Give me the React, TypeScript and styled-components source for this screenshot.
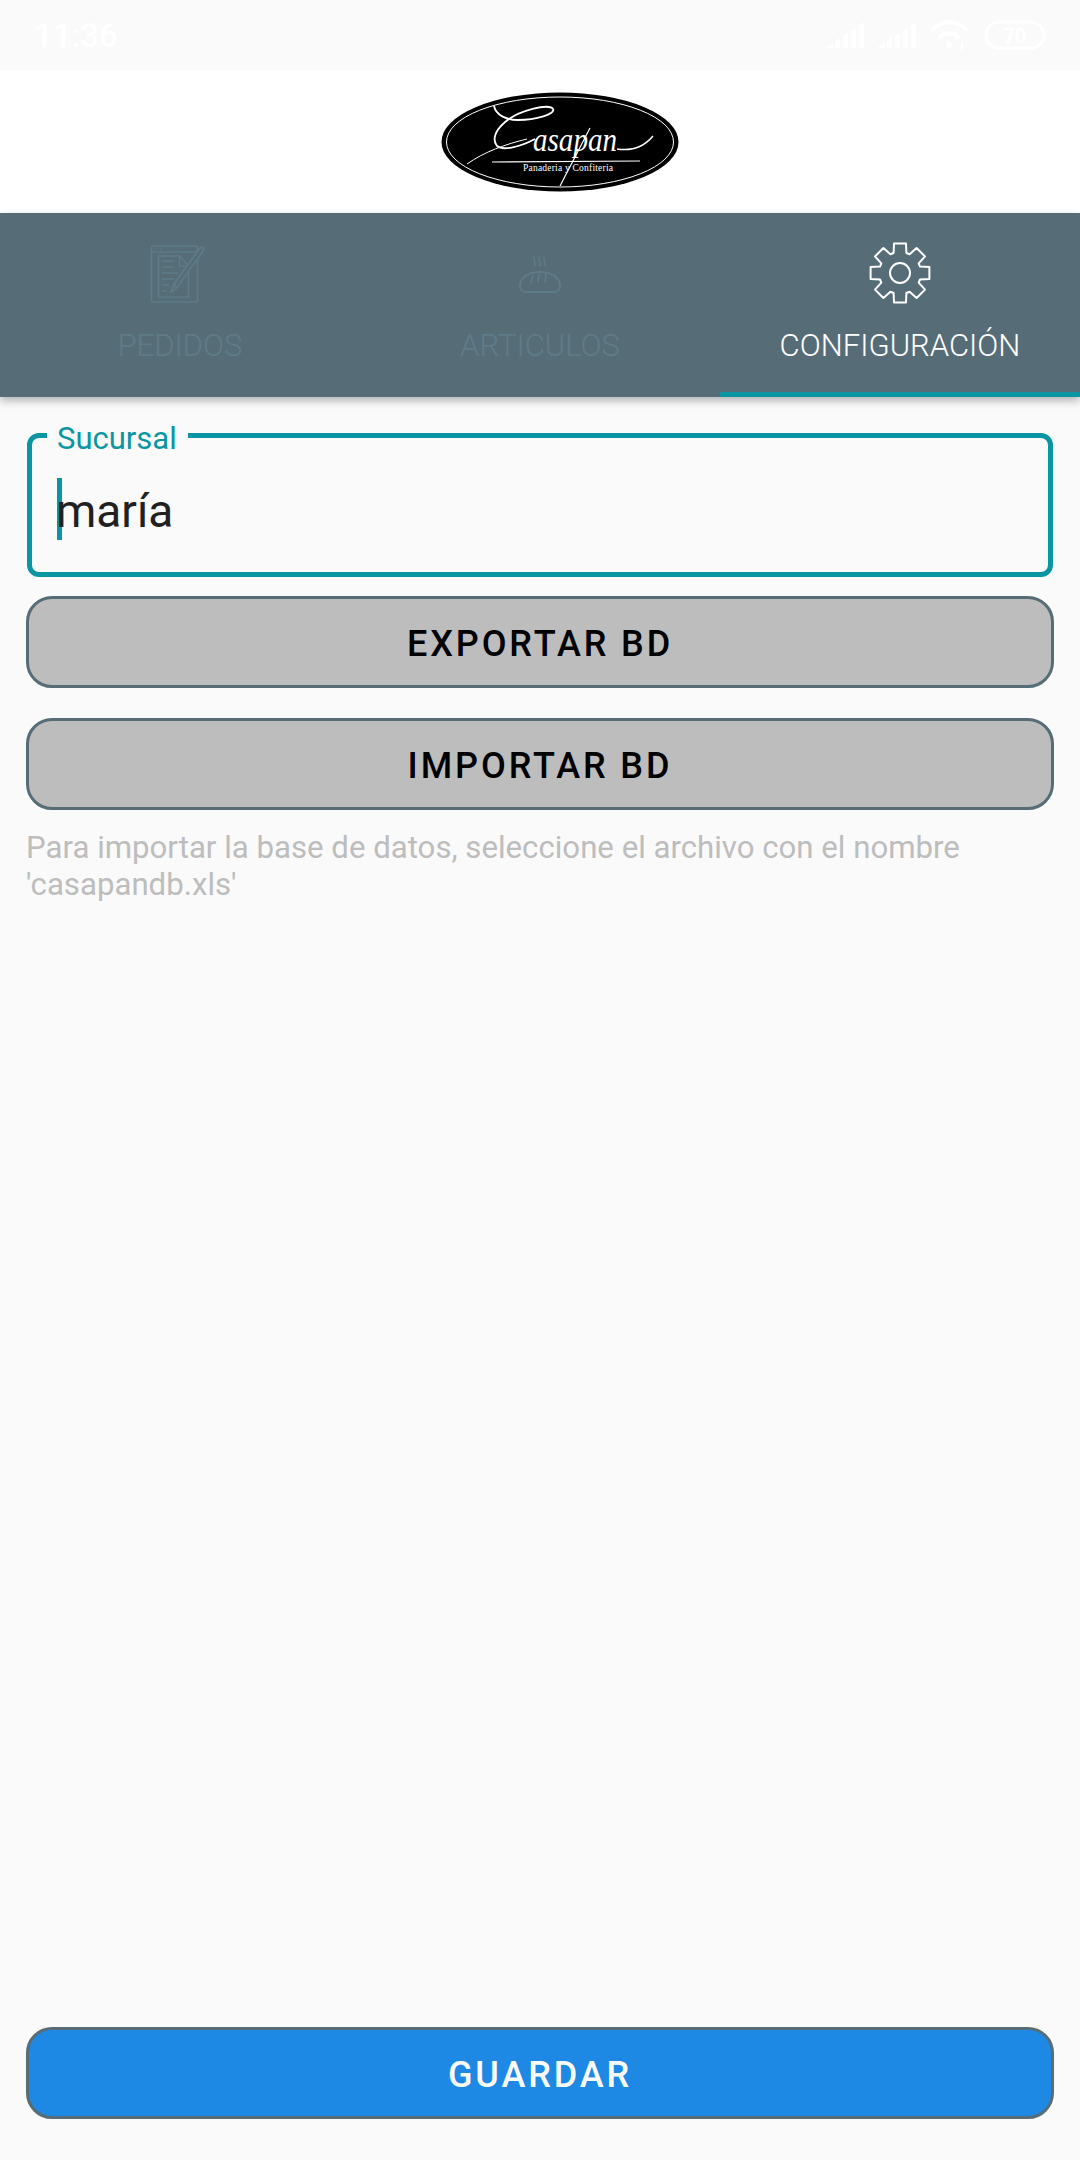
import styled, { createGlobalStyle } from 'styled-components';

const GlobalStyle = createGlobalStyle`
  html, body {
    margin: 0;
    padding: 0;
    background: #fafafa;
    font-family: 'Roboto', 'Liberation Sans', sans-serif;
  }
`;

const Page = styled.div`
  width: 1080px;
  height: 2160px;
  display: flex;
  flex-direction: column;
  background: #fafafa;
`;

const StatusBar = styled.div`
  height: 70px;
  flex: none;
  box-sizing: border-box;
  padding: 0 34px;
  display: flex;
  align-items: center;
  justify-content: space-between;
  color: #fff;
  background: #fafafa;
`;

const Clock = styled.span`
  font-size: 33px;
  font-weight: 500;
`;

const StatusIcons = styled.div`
  display: flex;
  align-items: center;
  gap: 14px;
`;

const LogoBar = styled.div`
  height: 143px;
  flex: none;
  background: #fff;
  display: flex;
  align-items: center;
  justify-content: center;
  padding-left: 40px;
`;

const TabBar = styled.div`
  height: 184px;
  flex: none;
  display: grid;
  grid-template-columns: repeat(3, 1fr);
  background: #566d78;
  box-shadow: 0 4px 8px rgba(0, 0, 0, 0.28);
  position: relative;
`;

const Tab = styled.div<{ $active?: boolean }>`
  box-sizing: border-box;
  height: 184px;
  display: flex;
  flex-direction: column;
  align-items: center;
  border-bottom: 5px solid ${(p) => (p.$active ? '#0a95a3' : 'transparent')};
  color: ${(p) => (p.$active ? '#ffffff' : '#5f7b88')};
`;

const TabIcon = styled.div<{ $top: number }>`
  box-sizing: border-box;
  height: 115px;
  width: 100%;
  padding-top: ${(p) => p.$top}px;
  display: flex;
  align-items: flex-start;
  justify-content: center;
`;

const TabLabel = styled.span`
  font-size: 31px;
  font-weight: 300;
  line-height: 36px;
`;

const Content = styled.main`
  flex: 1;
  box-sizing: border-box;
  padding: 36px 26px 41px;
  display: flex;
  flex-direction: column;
`;

const Field = styled.div`
  position: relative;
  height: 144px;
  box-sizing: border-box;
  margin: 0 0 19px 1px;
  width: 1026px;
  border: 5px solid #0a95a3;
  border-radius: 12px;
`;

const FieldLabel = styled.span`
  position: absolute;
  left: 15px;
  top: -17px;
  padding: 0 11px 0 10px;
  background: #fafafa;
  color: #0a95a3;
  font-size: 31px;
  line-height: 36px;
`;

const FieldValue = styled.div`
  position: absolute;
  left: 25px;
  top: 40px;
  height: 62px;
  border-left: 5px solid #0a95a3;
`;

const ValueText = styled.span`
  position: absolute;
  left: -6px;
  top: 4px;
  font-size: 46px;
  line-height: 58px;
  color: #212121;
`;

const Button = styled.div<{ $primary?: boolean }>`
  height: 92px;
  box-sizing: border-box;
  flex: none;
  display: flex;
  align-items: center;
  justify-content: center;
  padding-top: 3px;
  border: 3px solid #566d78;
  border-radius: 26px;
  background: ${(p) => (p.$primary ? '#1e88e5' : '#bdbdbd')};
  color: ${(p) => (p.$primary ? '#fafafa' : '#000000')};
  font-size: 36px;
  font-weight: 500;
  letter-spacing: 2.9px;
`;

const ButtonStack = styled.div`
  display: flex;
  flex-direction: column;
  gap: 30px;
`;

const Helper = styled.p`
  margin: 19px 0 0;
  font-size: 31.2px;
  line-height: 37px;
  color: #bdbdbd;
`;

const Spacer = styled.div`
  flex: 1;
`;

function SignalIcon() {
  return (
    <svg width="38" height="28" viewBox="0 0 38 28" fill="#fff">
      <path d="M0 27h7v-5L0 26zM9 27h5V17l-5 3zM17 27h5V12l-5 3zM25 27h5V7l-5 3zM33 27h5V1l-5 3z" />
    </svg>
  );
}

function WifiIcon() {
  return (
    <svg width="40" height="32" viewBox="0 0 40 32" fill="none" stroke="#fff" strokeWidth="4" strokeLinecap="round">
      <path d="M3 10C12 1 27 1 36 10" />
      <path d="M10 18C15 13 23 13 28 18" />
      <circle cx="19" cy="26" r="3" fill="#fff" stroke="none" />
      <path d="M32 24v8" strokeWidth="2" />
    </svg>
  );
}

function BatteryIcon() {
  return (
    <svg width="62" height="30" viewBox="0 0 62 30">
      <rect x="2" y="2" width="58" height="26" rx="13" fill="none" stroke="#fff" strokeWidth="3" />
      <text x="31" y="23" textAnchor="middle" fontSize="20" fontWeight="700" fontFamily="Roboto, sans-serif" fill="#fff">
        70
      </text>
    </svg>
  );
}

function PedidosIcon() {
  return (
    <svg width="60" height="60" viewBox="0 0 60 60" fill="none" stroke="currentColor" strokeWidth="1.6">
      <rect x="1.5" y="1" width="46" height="56" rx="2" />
      <path d="M1.5 7h46" />
      <path d="M4 4h1M7 4h1M10 4h1" />
      <path d="M8.500 11h21l9 10v31h-30z" />
      <path d="M29.500 11v10h9" />
      <path d="M12 16h12M12 22h12M12 28h16M12 34h12M12 40h7M12 46h5" />
      <path d="M21 47l3-8L50 3c2-2 5 1 3 3L26 44z" fill="#566d78" />
      <path d="M24 39l3 4" />
    </svg>
  );
}

function BreadIcon() {
  return (
    <svg width="44" height="38" viewBox="0 0 44 38" fill="none" stroke="currentColor" strokeWidth="2" strokeLinecap="round">
      <path d="M16 1c-1 3 2 5 1 9M21 1c-1 3 2 5 1 9M26 1c-1 3 2 5 1 9" strokeWidth="1.4" />
      <path d="M8 36c-4 0-6-3-6-6 0-9 9-14 20-14s20 5 20 14c0 3-2 6-6 6z" />
      <path d="M13 27l2-7M20 26l1-8M27 26l1-8" strokeWidth="1.6" />
    </svg>
  );
}

// 8 teeth round a centre, top tooth first
function gearPath(cx: number, cy: number) {
  const pt = (r: number, a: number) =>
    `${(cx + r * Math.sin(a)).toFixed(1)} ${(cy - r * Math.cos(a)).toFixed(1)}`;
  let d = '';
  for (let i = 0; i < 8; i++) {
    const a = (i * Math.PI) / 4;
    d += `${i === 0 ? 'M' : 'L'}${pt(21, a - 0.31)} L${pt(30, a - 0.2)} L${pt(30, a + 0.2)} L${pt(21, a + 0.31)} `;
  }
  return d + 'Z';
}

function GearIcon() {
  return (
    <svg width="64" height="64" viewBox="0 0 64 64" fill="none" stroke="#fff" strokeWidth="2" strokeLinejoin="round">
      <path d={gearPath(32, 32)} />
      <circle cx="32" cy="32" r="10" />
    </svg>
  );
}

function Logo() {
  return (
    <svg width="240" height="100" viewBox="0 0 240 100">
      <ellipse cx="120" cy="50" rx="118.500" ry="49.500" fill="#000" />
      <ellipse cx="120" cy="50" rx="113.500" ry="45" fill="none" stroke="#fff" strokeWidth="1" />
      <path
        d="M54 14C56 23 66 28 78 28C96 28 116 22 113 17C110 11 78 18 64 31C55 39 52 48 57 54C63 59 80 55 95 47"
        fill="none"
        stroke="#fff"
        strokeWidth="1.800"
      />
      <path d="M87 47C66 52 44 60 27 72" fill="none" stroke="#fff" strokeWidth="1" />
      <text
        x="93"
        y="59"
        fontFamily="'Liberation Serif', serif"
        fontStyle="italic"
        fontSize="34"
        fill="#fff"
        textLength="84"
        lengthAdjust="spacingAndGlyphs"
      >
        asapan
      </text>
      <path d="M177 57C190 59 203 56 213 44" fill="none" stroke="#fff" strokeWidth="1.500" />
      <path d="M52 70L200 69" stroke="#fff" strokeWidth="1.200" />
      <path d="M150 36L120 94" stroke="#fff" strokeWidth="1.200" />
      <text
        x="83"
        y="79"
        fontFamily="'Liberation Serif', serif"
        fontSize="9.500"
        fill="#fff"
        textLength="90"
      >
        Panaderia y Confiteria
      </text>
    </svg>
  );
}

export default function App() {
  return (
    <Page>
      <GlobalStyle />
      <StatusBar>
        <Clock>11:36</Clock>
        <StatusIcons>
          <SignalIcon />
          <SignalIcon />
          <WifiIcon />
          <BatteryIcon />
        </StatusIcons>
      </StatusBar>
      <LogoBar>
        <Logo />
      </LogoBar>
      <TabBar>
        <Tab>
          <TabIcon $top={32}>
            <PedidosIcon />
          </TabIcon>
          <TabLabel>PEDIDOS</TabLabel>
        </Tab>
        <Tab>
          <TabIcon $top={43}>
            <BreadIcon />
          </TabIcon>
          <TabLabel>ARTICULOS</TabLabel>
        </Tab>
        <Tab $active>
          <TabIcon $top={28}>
            <GearIcon />
          </TabIcon>
          <TabLabel>CONFIGURACIÓN</TabLabel>
        </Tab>
      </TabBar>
      <Content>
        <Field>
          <FieldLabel>Sucursal</FieldLabel>
          <FieldValue>
            <ValueText>maría</ValueText>
          </FieldValue>
        </Field>
        <ButtonStack>
          <Button>EXPORTAR BD</Button>
          <Button>IMPORTAR BD</Button>
        </ButtonStack>
        <Helper>
          Para importar la base de datos, seleccione el archivo con el nombre
          <br />
          'casapandb.xls'
        </Helper>
        <Spacer />
        <Button $primary>GUARDAR</Button>
      </Content>
    </Page>
  );
}
